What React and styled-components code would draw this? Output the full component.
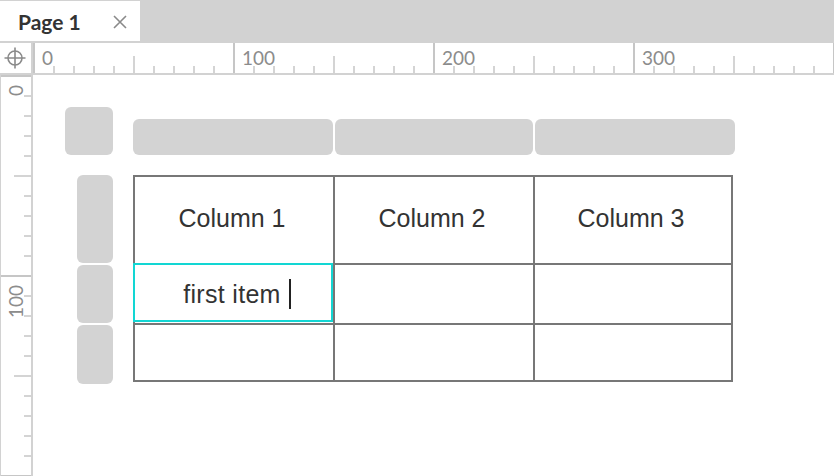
import React from 'react';
import styled, { createGlobalStyle } from 'styled-components';

const GlobalStyle = createGlobalStyle`
  html, body {
    margin: 0;
    padding: 0;
    background: #fff;
    overflow: hidden;
  }
`;

const line = '#d2d2d2';
const tick = '#c6c6c6';
const label = '#8c8c8c';

const Frame = styled.div`
  width: 834px;
  height: 476px;
  display: flex;
  flex-direction: column;
  font-family: Lato, 'Open Sans', sans-serif;
`;

const TabBar = styled.div`
  height: 43px;
  box-sizing: border-box;
  padding-top: 1px;
  background: ${line};
  display: flex;
  flex-shrink: 0;
`;

const Tab = styled.div`
  width: 140px;
  height: 40px;
  background: #fff;
  display: flex;
  align-items: center;
  box-sizing: border-box;
  padding-left: 18px;
  font-weight: 700;
  font-size: 21px;
  color: #333;
`;

const TabTitle = styled.span`
  flex: 1;
`;

const CloseIcon = styled.svg`
  width: 16px;
  height: 16px;
  margin-right: 12px;
  margin-top: 1px;
`;

const RulerRow = styled.div`
  height: 32px;
  box-sizing: border-box;
  border-bottom: 2px solid ${line};
  display: flex;
  flex-shrink: 0;
`;

const Corner = styled.div`
  width: 33px;
  box-sizing: border-box;
  border-right: 2px solid ${line};
  display: flex;
  align-items: center;
  justify-content: center;
  padding-right: 2px;
`;

const HRuler = styled.svg`
  flex: 1;
  height: 30px;
  display: block;
`;

const Body = styled.div`
  flex: 1;
  display: flex;
  min-height: 0;
`;

const VRuler = styled.div`
  width: 33px;
  box-sizing: border-box;
  border-left: 1px solid ${line};
  border-right: 2px solid ${line};
  overflow: hidden;
`;

const Canvas = styled.div`
  flex: 1;
  padding: 32px 0 0 32px;
  display: grid;
  grid-template-columns: 48px auto;
  grid-template-rows: 48px auto;
  gap: 20px;
  align-content: start;
  justify-content: start;
`;

const Handle = styled.div`
  background: #d3d3d3;
  border-radius: 6px;
`;

const CornerHandle = styled(Handle)`
  width: 48px;
  height: 48px;
`;

const ColumnHandles = styled.div`
  display: flex;
  gap: 2px;
  align-self: end;
`;

const ColumnHandle = styled(Handle)`
  height: 36px;
  width: ${(p) => p.$w}px;
`;

const RowHandles = styled.div`
  display: flex;
  flex-direction: column;
  gap: 2px;
  justify-self: end;
`;

const RowHandle = styled(Handle)`
  width: 36px;
  height: ${(p) => p.$h}px;
`;

const Table = styled.div`
  display: grid;
  grid-template-columns: 200px 200px 198px;
  grid-template-rows: 88px 60px 57px;
  border-top: 2px solid #777;
  border-left: 2px solid #777;
  align-self: start;
  justify-self: start;
  font-family: 'Liberation Sans', Arial, sans-serif;
  font-size: 25px;
  color: #333;
`;

const Cell = styled.div`
  position: relative;
  border-right: 2px solid #777;
  border-bottom: 2px solid #777;
  display: flex;
  align-items: center;
  justify-content: center;
  padding-bottom: ${(p) => (p.$header ? 4 : 0)}px;
  padding-right: ${(p) => (p.$header ? 4 : 0)}px;
  padding-left: ${(p) => (p.$selected ? 6 : 0)}px;
  letter-spacing: ${(p) => (p.$selected ? 0.3 : 0)}px;

  ${(p) =>
    p.$selected &&
    `
    &::after {
      content: '';
      position: absolute;
      top: -2px;
      left: -2px;
      right: 0;
      bottom: 1px;
      border: 2px solid #12d6d3;
    }
  `}
`;

const Caret = styled.span`
  display: inline-block;
  width: 2px;
  height: 30px;
  background: #222;
  margin-left: 8px;
`;

const hTicks = Array.from({ length: 41 }, (_, k) => k);
const vTicks = Array.from({ length: 21 }, (_, k) => k);

function tickLen(k) {
  if (k % 10 === 0) return 30;
  if (k % 5 === 0) return 17;
  return 7;
}

function HorizontalRuler() {
  return (
    <HRuler>
      {hTicks.map((k) => {
        const x = 1 + k * 20;
        const len = tickLen(k);
        return (
          <line
            key={k}
            x1={x}
            x2={x}
            y1={30 - len}
            y2={30}
            stroke={tick}
            strokeWidth={k % 10 === 0 ? 2 : 1.5}
          />
        );
      })}
      {[0, 10, 20, 30].map((k) => (
        <text
          key={k}
          x={1 + k * 20 + 8}
          y={22}
          fill={label}
          fontSize="19"
          fontFamily="Lato, 'Open Sans', sans-serif"
        >
          {k * 10}
        </text>
      ))}
    </HRuler>
  );
}

function VerticalRuler() {
  return (
    <VRuler>
      <svg width="30" height="401" style={{ display: 'block' }}>
        {vTicks.map((k) => {
          const y = 1 + k * 20;
          const len = tickLen(k);
          return (
            <line
              key={k}
              x1={30 - len}
              x2={30}
              y1={y}
              y2={y}
              stroke={tick}
              strokeWidth={k % 10 === 0 ? 2 : 1.5}
            />
          );
        })}
        {[0, 10].map((k) => {
          const y = 1 + k * 20 + 9;
          return (
            <text
              key={k}
              x={22}
              y={y}
              transform={`rotate(-90 22 ${y})`}
              textAnchor="end"
              fill={label}
              fontSize="19"
              fontFamily="Lato, 'Open Sans', sans-serif"
            >
              {k * 10}
            </text>
          );
        })}
      </svg>
    </VRuler>
  );
}

const columns = ['Column 1', 'Column 2', 'Column 3'];
const rows = [
  ['first item', '', ''],
  ['', '', ''],
];

export default function App() {
  return (
    <Frame>
      <GlobalStyle />
      <TabBar>
        <Tab>
          <TabTitle>Page 1</TabTitle>
          <CloseIcon viewBox="0 0 16 16">
            <path d="M2 2 L14 14 M14 2 L2 14" stroke="#8a8a8a" strokeWidth="1.6" fill="none" />
          </CloseIcon>
        </Tab>
      </TabBar>
      <RulerRow>
        <Corner>
          <svg width="22" height="22" viewBox="0 0 22 22">
            <circle cx="11" cy="11" r="7" stroke="#8a8a8a" strokeWidth="1.6" fill="none" />
            <path d="M11 0.5 V21.5 M0.5 11 H21.5" stroke="#8a8a8a" strokeWidth="1.6" />
          </svg>
        </Corner>
        <HorizontalRuler />
      </RulerRow>
      <Body>
        <VerticalRuler />
        <Canvas>
          <CornerHandle />
          <ColumnHandles>
            {[200, 198, 200].map((w, i) => (
              <ColumnHandle key={i} $w={w} />
            ))}
          </ColumnHandles>
          <RowHandles>
            {[88, 58, 59].map((h, i) => (
              <RowHandle key={i} $h={h} />
            ))}
          </RowHandles>
          <Table>
            {columns.map((c) => (
              <Cell key={c} $header>
                {c}
              </Cell>
            ))}
            {rows.map((r, ri) =>
              r.map((v, ci) => {
                const selected = ri === 0 && ci === 0;
                return (
                  <Cell key={`${ri}-${ci}`} $selected={selected}>
                    {v}
                    {selected && <Caret />}
                  </Cell>
                );
              })
            )}
          </Table>
        </Canvas>
      </Body>
    </Frame>
  );
}
